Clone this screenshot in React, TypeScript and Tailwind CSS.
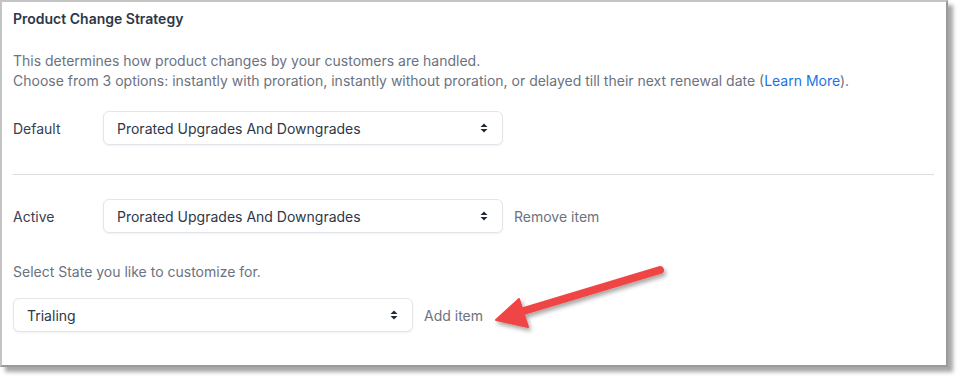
import React from "react";

function Chevrons() {
  return (
    <svg width="8" height="10" viewBox="0 0 8 10" className="shrink-0">
      <path d="M4 0.5 L7.5 4 L0.5 4 Z" fill="#1f2937" />
      <path d="M4 9.5 L7.5 6 L0.5 6 Z" fill="#1f2937" />
    </svg>
  );
}

function Select({ value }: { value: string }) {
  return (
    <div className="w-[400px] h-[34px] flex items-center justify-between pl-[13px] pr-[14px] rounded-[6px] border border-[#e2e5ea] bg-white shadow-[0_1px_2px_rgba(0,0,0,0.06)] text-[14px] text-[#2d3748]">
      <span>{value}</span>
      <Chevrons />
    </div>
  );
}

export default function App() {
  return (
    <div className="w-[963px] h-[384px] bg-white" style={{ fontFamily: "Inter, 'Noto Sans', sans-serif" }}>
      <div className="relative w-[948px] h-[367px] border-2 border-[#c4c4c4] border-r-[#9a9a9a] border-b-[#9a9a9a] bg-white shadow-[5px_5px_4px_rgba(0,0,0,0.35)] pl-[11px] pr-[12px] pt-[7px] flex flex-col">
        <div className="text-[14px] leading-[20px] font-semibold text-[#2d3748]">Product Change Strategy</div>
        <div className="mt-[22px] text-[14px] leading-[20px] text-[#6b7280]">
          <div>This determines how product changes by your customers are handled.</div>
          <div>
            Choose from 3 options: instantly with proration, instantly without proration, or delayed till their next renewal date (
            <span className="text-[#1a73e8]">Learn More</span>).
          </div>
        </div>
        <div className="mt-[20px] flex items-center">
          <div className="w-[90px] text-[14px] text-[#374151]">Default</div>
          <Select value="Prorated Upgrades And Downgrades" />
        </div>
        <div className="mt-[29px] h-px bg-[#dcdcdc] w-[921px]" />
        <div className="mt-[24px] flex items-center">
          <div className="w-[90px] text-[14px] text-[#374151]">Active</div>
          <Select value="Prorated Upgrades And Downgrades" />
          <div className="ml-[11px] text-[14px] text-[#6b7280]">Remove item</div>
        </div>
        <div className="mt-[29px] text-[14px] leading-[20px] text-[#6b7280]">Select State you like to customize for.</div>
        <div className="mt-[16px] flex items-center">
          <Select value="Trialing" />
          <div className="ml-[11px] text-[14px] text-[#6b7280]">Add item</div>
        </div>
        <svg className="absolute left-[480px] top-[250px]" width="200" height="100" viewBox="480 250 200 100" style={{ overflow: "visible" }}>
          <defs>
            <filter id="sh" x="-20%" y="-20%" width="150%" height="160%">
              <feDropShadow dx="2" dy="3" stdDeviation="2" floodColor="#000" floodOpacity="0.35" />
            </filter>
          </defs>
          <g filter="url(#sh)">
            <line x1="658" y1="268" x2="515" y2="311" stroke="#f04545" strokeWidth="8" strokeLinecap="round" />
            <path d="M494 318 L517 297 L526 325 Z" fill="#f04545" stroke="#f04545" strokeWidth="2" strokeLinejoin="round" />
          </g>
        </svg>
      </div>
    </div>
  );
}
